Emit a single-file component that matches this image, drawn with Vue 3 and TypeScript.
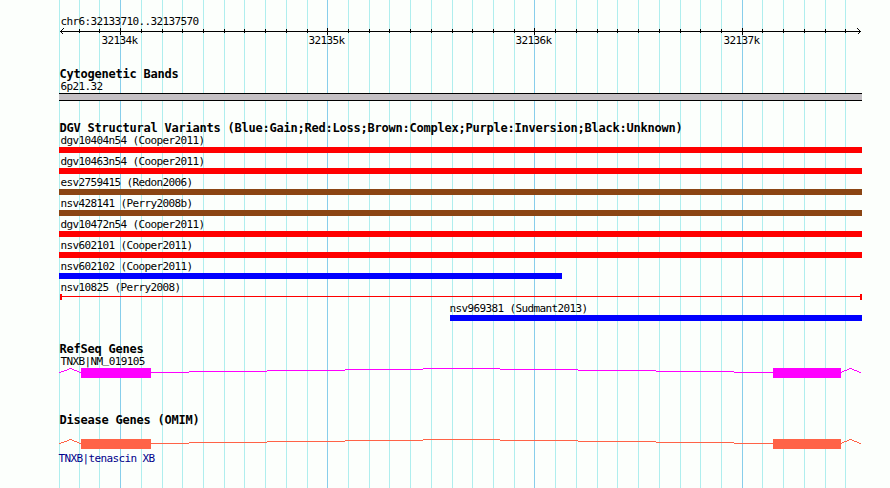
<script setup lang="ts">
interface Variant {
  name: string
  kind: 'gain' | 'loss' | 'complex'
  start: number
  end: number
  thin?: boolean
}

interface GeneTrack {
  title: string
  label: string
  kind: string
}

// x positions are relative to the left edge of the panel
const gridLines = [
  0, 20, 40, 61, 82, 103, 123, 144, 165, 185, 206, 227, 248, 268, 289, 310, 330, 351, 372, 393,
  413, 434, 455, 475, 496, 517, 538, 558, 579, 600, 621, 641, 662, 683, 703, 724, 745, 766, 786,
]

const majorTicks = [
  { x: 61, label: '32134k' },
  { x: 268, label: '32135k' },
  { x: 475, label: '32136k' },
  { x: 683, label: '32137k' },
]

const isMajor = (x: number) => majorTicks.some((tick) => tick.x === x)

const variants: Variant[] = [
  { name: 'dgv10404n54 (Cooper2011)', kind: 'loss', start: 0, end: 803 },
  { name: 'dgv10463n54 (Cooper2011)', kind: 'loss', start: 0, end: 803 },
  { name: 'esv2759415 (Redon2006)', kind: 'complex', start: 0, end: 803 },
  { name: 'nsv428141 (Perry2008b)', kind: 'complex', start: 0, end: 803 },
  { name: 'dgv10472n54 (Cooper2011)', kind: 'loss', start: 0, end: 803 },
  { name: 'nsv602101 (Cooper2011)', kind: 'loss', start: 0, end: 803 },
  { name: 'nsv602102 (Cooper2011)', kind: 'gain', start: 0, end: 503 },
  { name: 'nsv10825 (Perry2008)', kind: 'loss', start: 1, end: 803, thin: true },
  { name: 'nsv969381 (Sudmant2013)', kind: 'gain', start: 391, end: 803 },
]

const genes: GeneTrack[] = [
  { title: 'RefSeq Genes', label: 'TNXB|NM_019105', kind: 'refseq' },
  { title: 'Disease Genes (OMIM)', label: 'TNXB|tenascin XB', kind: 'omim' },
]

// [x, y, width] runs of the intron connectors
const intron = [
  [0, 4, 2], [2, 3, 3], [5, 2, 3], [8, 1, 2], [10, 0, 3], [13, 1, 2], [15, 2, 3], [18, 3, 2], [20, 4, 2],
  [92, 4, 38], [130, 3, 78], [208, 2, 78], [286, 1, 78], [364, 0, 77], [441, 1, 78],
  [519, 2, 78], [597, 3, 78], [675, 4, 39],
  [782, 4, 1], [783, 3, 2], [785, 2, 3], [788, 1, 2], [790, 0, 3], [793, 1, 2], [795, 2, 3], [798, 3, 2], [800, 4, 2],
]
</script>

<template>
  <main class="browser">
    <svg class="grid" width="803" height="488" aria-hidden="true">
      <rect
        v-for="x in gridLines"
        :key="x"
        :x="x"
        y="0"
        width="1"
        height="488"
        :class="isMajor(x) ? 'line-major' : 'line-minor'"
      />
    </svg>

    <div class="tracks">
      <div class="label region">chr6:32133710..32137570</div>
      <svg class="ruler" width="803" height="19">
        <rect x="1" y="3" width="801" height="1" />
        <path class="arrow" d="M4.5 0.5 L1.5 3.5 L4.5 6.5 M798.5 0.5 L801.5 3.5 L798.5 6.5" />
        <template v-for="x in gridLines" :key="x">
          <rect v-if="isMajor(x)" :x="x" y="0" width="1" height="7" />
          <rect v-else-if="x > 0" :x="x" y="1" width="1" height="4" />
        </template>
        <text v-for="tick in majorTicks" :key="tick.label" :x="tick.x - 18.4" y="16">
          {{ tick.label }}
        </text>
      </svg>

      <section class="cytoband">
        <h2>Cytogenetic Bands</h2>
        <div class="label">6p21.32</div>
        <div class="band"></div>
      </section>

      <section class="dgv">
        <h2>DGV Structural Variants (Blue:Gain;Red:Loss;Brown:Complex;Purple:Inversion;Black:Unknown)</h2>
        <div class="variants">
          <div v-for="variant in variants" :key="variant.name" class="variant">
            <div
              class="label"
              :style="{ marginLeft: Math.max(0, variant.start - 2) + 'px' }"
            >
              {{ variant.name }}
            </div>
            <div
              class="bar"
              :class="[variant.kind, { thin: variant.thin }]"
              :style="{ marginLeft: variant.start + 'px', width: variant.end - variant.start + 'px' }"
            ></div>
          </div>
        </div>
      </section>

      <section v-for="gene in genes" :key="gene.kind" class="gene" :class="gene.kind">
        <h2>{{ gene.title }}</h2>
        <div class="label">
          <span v-for="(part, i) in gene.label.split(/(_)/)" :key="i" :class="{ raised: part === '_' }">{{ part }}</span>
        </div>
        <svg class="model" width="803" height="10">
          <rect v-for="([x, y, w], i) in intron" :key="i" :x="x" :y="y" :width="w" height="1" />
          <rect x="22" y="0" width="70" height="10" />
          <rect x="714" y="0" width="68" height="10" />
        </svg>
      </section>
    </div>
  </main>
</template>

<style>
body {
  margin: 0;
  background: #fcfffc;
}
</style>

<style scoped>
.browser {
  position: relative;
  box-sizing: border-box;
  width: 890px;
  height: 488px;
  padding-left: 59px;
  overflow: hidden;
  background: #fcfffc;
  color: #000;
  font-family: 'DejaVu Sans Mono', monospace;
  font-size: 11px;
  letter-spacing: -0.622px;
}

.grid {
  position: absolute;
  top: 0;
  left: 59px;
}

.line-minor {
  fill: #afeeee;
}

.line-major {
  fill: #87ceeb;
}

.tracks {
  position: relative;
  display: flex;
  flex-direction: column;
  width: 803px;
  padding-top: 15px;
}

svg {
  display: block;
  shape-rendering: crispEdges;
}

h2 {
  margin: 0;
  padding-left: 0.4px;
  font-size: 12px;
  font-weight: bold;
  line-height: 14px;
  letter-spacing: -0.224px;
  white-space: nowrap;
}

.label {
  height: 13px;
  padding-left: 1.6px;
  line-height: 13px;
  white-space: nowrap;
}

.raised {
  line-height: 0;
  vertical-align: 2px;
}

.arrow {
  fill: none;
  stroke: #000;
}

.cytoband {
  margin-top: 20px;
}

.cytoband .label {
  margin-top: -1px;
}

.band {
  height: 6px;
  border: solid #000;
  border-width: 1px 0;
  background: #c4c0c4;
}

.dgv {
  margin-top: 20px;
}

.variants {
  display: flex;
  flex-direction: column;
  gap: 2px;
  margin-top: -1px;
}

.bar {
  box-sizing: border-box;
  height: 6px;
}

.loss {
  background: #ff0000;
}

.complex {
  background: #8b4513;
}

.gain {
  background: #0000ff;
}

.thin {
  border: solid #ff0000;
  border-width: 0 2px;
  background: linear-gradient(#ff0000, #ff0000) 0 2px / 100% 1px no-repeat;
}

.gene {
  display: flex;
  flex-direction: column;
}

.refseq {
  margin-top: 21px;
}

.refseq .label {
  margin-top: -1px;
}

.refseq .model {
  fill: #ff00ff;
}

.omim {
  margin-top: 35px;
}

.omim .model {
  order: 1;
  margin-top: 12px;
  fill: #ff6347;
}

.omim .label {
  order: 2;
  margin-top: 3px;
  margin-left: -2px;
  color: #00008b;
}
</style>
